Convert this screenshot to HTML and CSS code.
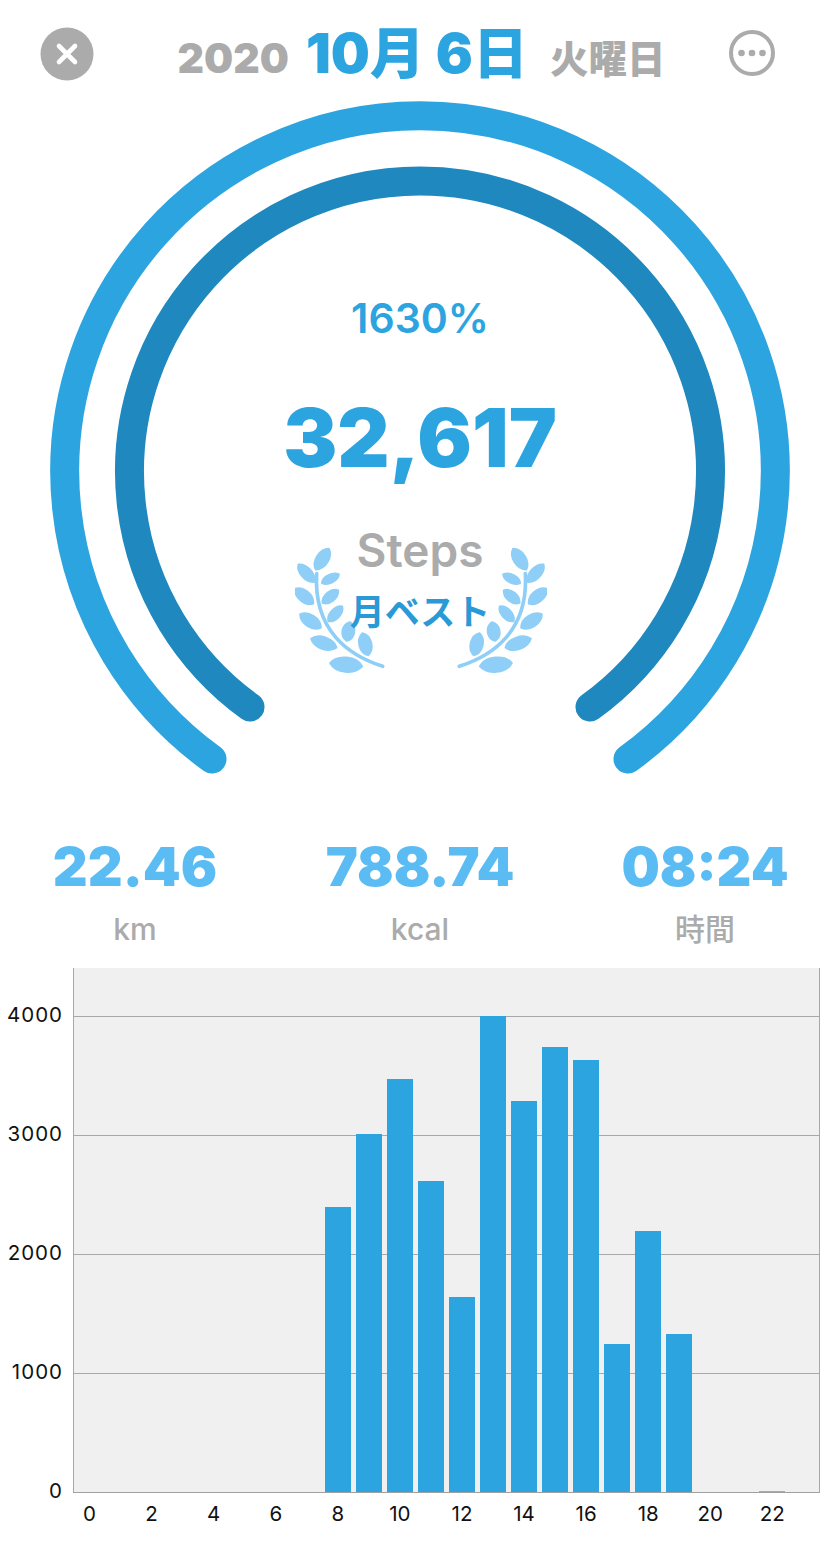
FILE: index.html
```html
<!DOCTYPE html>
<html lang="ja">
<head>
<meta charset="utf-8">
<title>Steps</title>
<link rel="stylesheet" href="styles.css">
</head>
<body>
<div class="page">
  <header class="top">
    <svg class="ic-close" viewBox="0 0 54 54" width="54" height="54"><circle cx="27" cy="27" r="26.5" fill="#ababab"/><path d="M19 19 35 35M35 19 19 35" stroke="#fff" stroke-width="4.6" stroke-linecap="round"/></svg>
    <div class="date"><span class="yr">2020</span><span class="md">10月 6日</span><span class="wd">火曜日</span></div>
    <svg class="ic-more" viewBox="0 0 48 48" width="48" height="48"><circle cx="24" cy="24" r="21" fill="none" stroke="#ababab" stroke-width="4"/><circle cx="13.500" cy="24" r="3.300" fill="#ababab"/><circle cx="24" cy="24" r="3.300" fill="#ababab"/><circle cx="34.500" cy="24" r="3.300" fill="#ababab"/></svg>
  </header>
  <section class="gauge">
    <svg class="rings" viewBox="0 0 840 700" width="840" height="700">
      <path d="M212 658A355.3 355.3 0 1 1 628 658" fill="none" stroke="#2ca4e0" stroke-width="29" stroke-linecap="round"/>
      <path d="M250 606A290.500 290.500 0 1 1 590 606" fill="none" stroke="#1e88bf" stroke-width="29" stroke-linecap="round"/>
    </svg>
    <svg class="laurel" viewBox="30 20 756 390" width="252" height="130">
      <g id="l" fill="#8fcff7" stroke="#8fcff7" stroke-width="5" stroke-linejoin="round">
        <path d="M293 378C190 345 85 270 95 100" fill="none" stroke-width="11" stroke-linecap="round"/>
        <path d="M92 88C121 88 145 51 132 25 103 25 79 62 92 88Z"/>
        <path d="M88 125C94 100 66 69 40 72 34 97 62 128 88 125Z"/>
        <path d="M110 128C128 138 160 122 162 102 144 92 112 108 110 128Z"/>
        <path d="M85 190C88 163 55 136 30 145 27 172 60 199 85 190Z"/>
        <path d="M112 188C134 196 162 174 160 150 138 142 110 164 112 188Z"/>
        <path d="M108 262C108 234 71 210 45 222 45 250 82 274 108 262Z"/>
        <path d="M130 243C152 247 178 220 172 198 150 194 124 221 130 243Z"/>
        <path d="M155 322C148 294 101 277 78 295 85 323 132 340 155 322Z"/>
        <path d="M185 302C211 295 217 260 195 245 169 252 163 287 185 302Z"/>
        <path d="M250 345C270 325 260 284 232 278 212 298 222 339 250 345Z"/>
        <path d="M232 378C216 347 157 341 135 368 151 399 210 405 232 378Z"/>
      </g>
      <use href="#l" transform="matrix(-1 0 0 1 816 0)"/>
    </svg>
    <div class="center">
      <div class="pct">1630%</div>
      <div class="steps">32,617</div>
      <div class="unit">Steps</div>
      <div class="best">月ベスト</div>
    </div>
  </section>
  <section class="stats">
    <div class="stat"><div class="val">22.46</div><div class="lab">km</div></div>
    <div class="stat"><div class="val">788.74</div><div class="lab">kcal</div></div>
    <div class="stat"><div class="val">08:24</div><div class="lab">時間</div></div>
  </section>
  <section class="chart">
    <div class="yaxis"><span>4000</span><span>3000</span><span>2000</span><span>1000</span><span>0</span></div>
    <div class="plot">
      <div class="grid"><i></i><i></i><i></i><i></i></div>
      <div class="bars">
        <div class="slot"></div><div class="slot"></div><div class="slot"></div><div class="slot"></div>
        <div class="slot"></div><div class="slot"></div><div class="slot"></div><div class="slot"></div>
        <div class="slot"><b style="height:285px"></b></div>
        <div class="slot"><b style="height:358px"></b></div>
        <div class="slot"><b style="height:413px"></b></div>
        <div class="slot"><b style="height:311px"></b></div>
        <div class="slot"><b style="height:195px"></b></div>
        <div class="slot"><b style="height:476px"></b></div>
        <div class="slot"><b style="height:391px"></b></div>
        <div class="slot"><b style="height:445px"></b></div>
        <div class="slot"><b style="height:432px"></b></div>
        <div class="slot"><b style="height:148px"></b></div>
        <div class="slot"><b style="height:261px"></b></div>
        <div class="slot"><b style="height:158px"></b></div>
        <div class="slot"></div><div class="slot"></div>
        <div class="slot"><b class="faint" style="height:1px"></b></div>
        <div class="slot"></div>
      </div>
    </div>
    <div class="xaxis"><span>0</span><span>2</span><span>4</span><span>6</span><span>8</span><span>10</span><span>12</span><span>14</span><span>16</span><span>18</span><span>20</span><span>22</span></div>
  </section>
</div>
</body>
</html>
```
FILE: styles.css
```css
* { box-sizing: border-box; }
html, body { margin: 0; padding: 0; background: #fff; }
body { font-family: Inter, "Noto Sans CJK JP", sans-serif; }
.page { width: 840px; height: 1562px; overflow: hidden; }

.top { height: 101px; position: relative; display: flex; justify-content: center; }
.ic-close { position: absolute; left: 40px; top: 27px; }
.ic-more { position: absolute; left: 728px; top: 29px; }
.date { display: flex; align-items: baseline; height: 82px; padding: 9px 0 0 3px; font-weight: 900; color: #ababab; }
.yr { font-size: 41px; margin-right: 17px; }
.md { font-size: 55px; color: #2ca4e0; margin-right: 22px; }
.wd { font-size: 38.500px; }

.gauge { position: relative; height: 700px; }
.rings { position: absolute; left: 0; top: 0; }
.laurel { position: absolute; left: 295px; top: 446px; }
.center { position: relative; display: flex; flex-direction: column; align-items: center; }
.pct { margin-top: 194px; height: 46px; line-height: 46px; font-size: 41px; font-weight: 600; color: #2ca4e0; }
.steps { margin-top: 55px; height: 84px; line-height: 84px; font-size: 81px; font-weight: 900; color: #2ca4e0; }
.unit { margin-top: 43px; height: 54px; line-height: 54px; font-size: 46px; font-weight: 600; color: #ababab; }
.best { margin-top: 13px; height: 44px; line-height: 44px; font-size: 35px; font-weight: 700; color: #2a9ad6; }

.stats { height: 167px; padding-top: 33px; display: flex; }
.stat { display: flex; flex-direction: column; align-items: center; }
.stat:nth-child(1) { width: 270px; }
.stat:nth-child(2) { width: 300px; }
.stat:nth-child(3) { width: 270px; }
.val { height: 66px; line-height: 66px; font-size: 54px; font-weight: 900; color: #5bbcf3; }
.lab { margin-top: 9px; height: 40px; line-height: 40px; font-size: 30px; font-weight: 500; color: #ababab; }

.chart { display: grid; grid-template-columns: 73px 747px; grid-template-rows: 525px 60px; }
.yaxis { grid-row: 1 / 3; display: flex; flex-direction: column; align-items: flex-end; padding: 35px 10px 0 0; font: 400 20.500px/24px Inter, sans-serif; letter-spacing: 1px; color: #111; }
.yaxis span { flex: none; height: 119px; }
.plot { position: relative; background: #f0f0f1; border-left: 1px solid #a8a8a8; border-right: 1px solid #a8a8a8; border-bottom: 1px solid #a0a0a0; }
.grid { position: absolute; inset: 48px 0 0 0; display: flex; flex-direction: column; }
.grid i { display: block; flex: none; height: 119px; border-top: 1px solid #a8a8a8; }
.bars { position: absolute; inset: 0; display: grid; grid-template-columns: repeat(24, 1fr); align-items: end; }
.slot { display: flex; align-items: flex-end; justify-content: center; height: 100%; }
.slot b { display: block; width: 26px; background: #2ca4e0; }
.slot b.faint { background: #6cbcec; }
.xaxis { grid-column: 2; grid-row: 2; display: grid; grid-template-columns: repeat(12, 62.080px); padding: 9px 0 0 1px; font: 400 20.500px/24px Inter, sans-serif; color: #111; white-space: nowrap; }
.xaxis span { width: 31.040px; text-align: center; }
```
